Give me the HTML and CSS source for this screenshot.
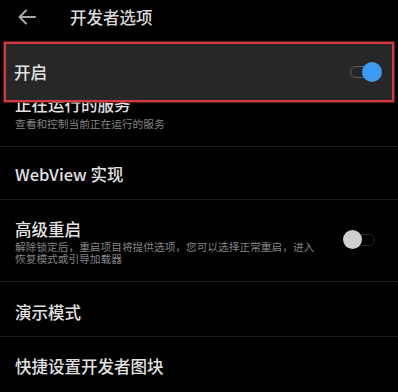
FILE: index.html
```html
<!DOCTYPE html>
<html lang="zh">
<head>
<meta charset="utf-8">
<link rel="stylesheet" href="styles.css">
</head>
<body>
<div class="screen">
  <header class="topbar">
    <svg class="back" width="18" height="16" viewBox="0 0 18 16">
      <path d="M17 8H2M8 1.5L1.5 8L8 14.5" fill="none" stroke="#a8a8a8" stroke-width="2" stroke-linecap="round" stroke-linejoin="round"/>
    </svg>
    <span class="title">开发者选项</span>
  </header>

  <div class="master">
    <span class="item-title">开启</span>
    <span class="switch on"><span class="track"></span><span class="knob"></span></span>
  </div>

  <div class="item first">
    <div class="item-title">正在运行的服务</div>
    <div class="item-sub">查看和控制当前正在运行的服务</div>
  </div>
  <div class="item webview">
    <div class="item-title">WebView 实现</div>
  </div>
  <div class="item restart">
    <div class="text">
      <div class="item-title">高级重启</div>
      <div class="item-sub two">解除锁定后，重启项目将提供选项，您可以选择正常重启，进入<br>恢复模式或引导加载器</div>
    </div>
    <span class="switch off"><span class="track"></span><span class="knob"></span></span>
  </div>
  <div class="item demo">
    <div class="item-title">演示模式</div>
  </div>
  <div class="item tiles">
    <div class="item-title">快捷设置开发者图块</div>
  </div>
</div>
</body>
</html>
```

FILE: styles.css
```css
* { box-sizing: border-box; }
html, body { margin: 0; padding: 0; background: #000; }
body {
  font-family: "Noto Sans CJK SC", "Noto Sans", sans-serif;
  color: #e2e2e2;
  width: 398px;
  height: 392px;
  overflow: hidden;
}
.screen { display: flex; flex-direction: column; }

.topbar {
  height: 34px;
  margin-bottom: 8px;
  display: flex;
  align-items: center;
  padding-left: 18px;
}
.back { display: block; }
.title {
  margin-left: 34px;
  font-size: 16.5px;
  line-height: 20px;
  font-weight: 500;
  color: #d8d8d8;
}

.master {
  position: relative;
  z-index: 2;
  height: 60px;
  margin: 0 4px -8px 4px;
  border: 2px solid #d23a41;
  box-shadow: 0 0 0 1px rgba(140, 30, 35, 0.7);
  background: #272727;
  display: flex;
  align-items: center;
  justify-content: space-between;
  padding: 0 10px 0 8px;
}

.item-title {
  font-size: 16.5px;
  line-height: 20px;
  font-weight: 500;
  color: #e2e2e2;
  white-space: nowrap;
}
.item-sub {
  font-size: 10.7px;
  line-height: 12px;
  color: #858585;
  margin-top: 4px;
  white-space: nowrap;
}
.item-sub.two { line-height: 11.5px; margin-top: 2px; }

.item {
  padding: 0 15px;
  border-bottom: 1px solid #1d1d1d;
}
.item.first { padding-top: 0; padding-bottom: 16px; }
.item.webview { padding-top: 17px; padding-bottom: 15px; }
.item.restart {
  padding-top: 19px;
  padding-bottom: 17px;
  display: flex;
  align-items: flex-start;
  justify-content: space-between;
  padding-right: 23px;
}
.item.demo { padding-top: 20px; padding-bottom: 14px; }
.item.tiles { padding-top: 19px; border-bottom: none; }

.switch {
  position: relative;
  display: block;
  width: 32px;
  height: 20px;
}
.switch .track {
  position: absolute;
  top: 4px;
  height: 12px;
  border-radius: 6px;
}
.switch .knob {
  position: absolute;
  top: 0;
  width: 20px;
  height: 20px;
  border-radius: 50%;
}
.switch.on .track { left: 0; width: 28px; border: 1.5px solid #5e5e5e; }
.switch.on .knob { right: 0; background: #3c9bf0; }

.restart .switch { margin-top: 11px; }
.switch.off .track { left: 4px; width: 28px; border: 1.5px solid #262626; }
.switch.off .knob { left: 0; background: #cfcfcf; width: 19px; height: 19px; }
```
